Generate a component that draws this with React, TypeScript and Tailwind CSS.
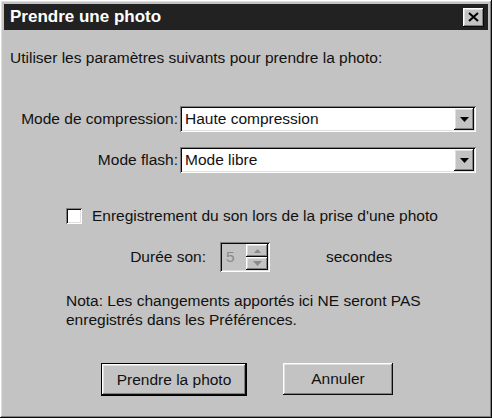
import React from "react";

const raised =
  "shadow-[inset_-1px_-1px_#0a0a0a,inset_1px_1px_#ffffff,inset_-2px_-2px_#808080,inset_2px_2px_#dfdfdf]";
const sunken =
  "shadow-[inset_1px_1px_#808080,inset_-1px_-1px_#ffffff,inset_2px_2px_#0a0a0a,inset_-2px_-2px_#dfdfdf]";

function Arrow({ color = "#000" }: { color?: string }) {
  return (
    <svg width="9" height="5" viewBox="0 0 9 5">
      <polygon points="0,0 9,0 4.5,5" fill={color} />
    </svg>
  );
}

function Combo({ value }: { value: string }) {
  return (
    <div className={`flex h-[26px] w-[296px] items-center bg-white p-[2px] ${sunken}`}>
      <div className="flex-1 pl-[3px] leading-none">{value}</div>
      <div className={`flex h-full w-[20px] items-center justify-center bg-[#c3c3c3] ${raised}`}>
        <Arrow />
      </div>
    </div>
  );
}

export default function App() {
  return (
    <div
      className={`flex h-[418px] w-[492px] flex-col bg-[#c3c3c3] p-[4px] text-[15.5px] text-[#111] ${raised}`}
      style={{ fontFamily: '"Liberation Sans", Arial, sans-serif' }}
    >
      {/* Title bar */}
      <div className="flex h-[26px] items-center justify-between bg-[#222222] pl-[6px] pr-[4px]">
        <span className="text-[17px] font-bold text-white">Prendre une photo</span>
        <div className={`flex h-[19px] w-[21px] items-center justify-center bg-[#c3c3c3] ${raised}`}>
          <svg width="11" height="10" viewBox="0 0 11 10">
            <path d="M1 1 L10 9 M10 1 L1 9" stroke="#000" strokeWidth="2" />
          </svg>
        </div>
      </div>

      <div className="flex flex-col pl-[6px]">
        <p className="mt-[18px] leading-[20px]">Utiliser les paramètres suivants pour prendre la photo:</p>

        <div className="mt-[38px] flex flex-col gap-[15px]">
          <div className="flex items-center">
            <div className="w-[170px] pr-[2px] text-right">Mode de compression:</div>
            <Combo value="Haute compression" />
          </div>
          <div className="flex items-center">
            <div className="w-[170px] pr-[2px] text-right">Mode flash:</div>
            <Combo value="Mode libre" />
          </div>
        </div>

        <div className="mt-[33px] flex h-[20px] items-center pl-[56px]">
          <div className={`h-[16px] w-[16px] bg-white ${sunken}`} />
          <span className="ml-[10px]">Enregistrement du son lors de la prise d'une photo</span>
        </div>

        <div className="mt-[16px] flex h-[30px] items-center">
          <div className="w-[198px] pr-[2px] text-right">Durée son:</div>
          <div className={`ml-[12px] flex h-[30px] w-[50px] items-center p-[2px] ${sunken}`}>
            <div className="flex-1 pl-[4px] text-[#8a8a8a]">5</div>
            <div className="flex h-full w-[22px] flex-col">
              <div className={`flex flex-1 items-center justify-center bg-[#c3c3c3] ${raised}`}>
                <svg width="7" height="4" viewBox="0 0 7 4">
                  <polygon points="0,4 7,4 3.5,0" fill="#8a8a8a" />
                </svg>
              </div>
              <div className={`flex flex-1 items-center justify-center bg-[#c3c3c3] ${raised}`}>
                <Arrow color="#8a8a8a" />
              </div>
            </div>
          </div>
          <span className="ml-[56px]">secondes</span>
        </div>

        <p className="mt-[19px] pl-[56px] leading-[19px]">
          Nota: Les changements apportés ici NE seront PAS
          <br />
          enregistrés dans les Préférences.
        </p>

        <div className="mt-[34px] flex pl-[91px]">
          <button className="h-[33px] w-[146px] border border-black bg-[#c3c3c3] p-0">
            <div className={`flex h-full w-full items-center justify-center ${raised}`}>Prendre la photo</div>
          </button>
          <button className={`ml-[36px] h-[32px] w-[110px] bg-[#c3c3c3] ${raised}`}>Annuler</button>
        </div>
      </div>
    </div>
  );
}
